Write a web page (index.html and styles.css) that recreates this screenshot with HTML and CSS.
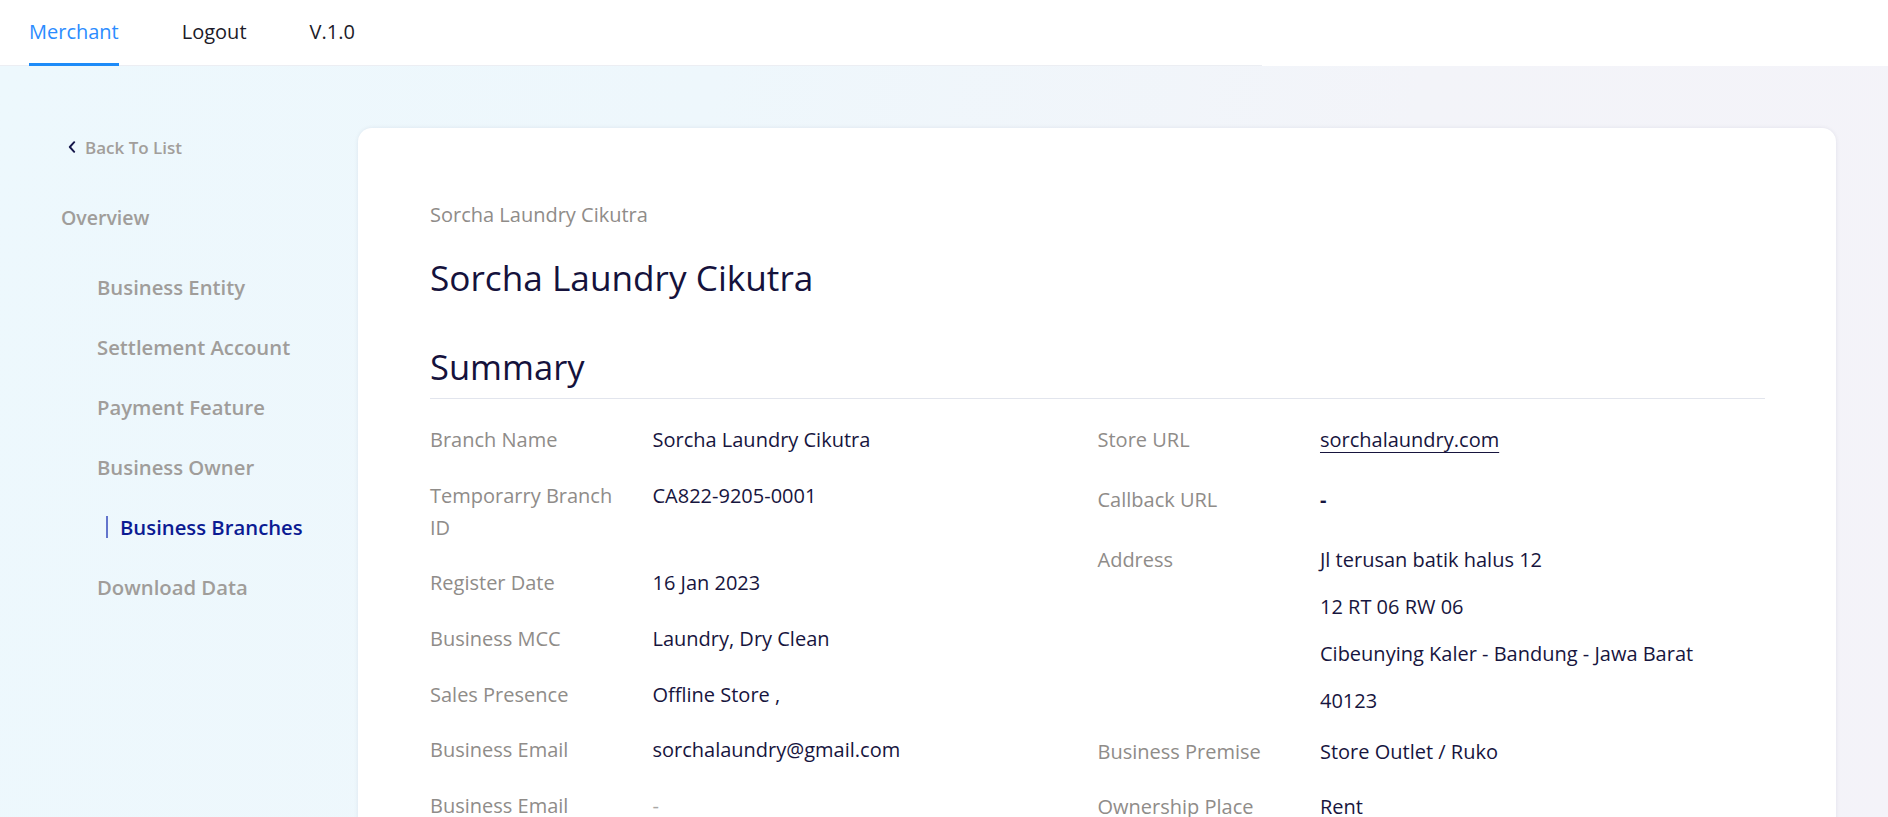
FILE: index.html
```html
<!DOCTYPE html>
<html lang="en">
<head>
<meta charset="utf-8">
<title>Merchant - Business Branches</title>
<link rel="stylesheet" href="styles.css">
</head>
<body>
<header class="topbar">
  <nav class="tabs">
    <a class="tab tab--active" href="#">Merchant</a>
    <a class="tab" href="#">Logout</a>
    <a class="tab" href="#">V.1.0</a>
  </nav>
</header>
<div class="layout">
  <aside class="sidebar">
    <a class="back-link" href="#">
      <svg class="back-icon" width="8" height="12" viewBox="0 0 8 12" aria-hidden="true"><polyline points="6.2,1.2 1.8,6 6.2,10.8" fill="none" stroke="#15164a" stroke-width="1.9" stroke-linecap="round" stroke-linejoin="round"/></svg>
      <span>Back To List</span>
    </a>
    <div class="side-title">Overview</div>
    <ul class="side-menu">
      <li class="side-item">Business Entity</li>
      <li class="side-item">Settlement Account</li>
      <li class="side-item">Payment Feature</li>
      <li class="side-item">Business Owner</li>
      <li class="side-item side-item--active">Business Branches</li>
      <li class="side-item">Download Data</li>
    </ul>
  </aside>
  <main class="card">
    <div class="breadcrumb">Sorcha Laundry Cikutra</div>
    <h1 class="page-title">Sorcha Laundry Cikutra</h1>
    <h2 class="section-title">Summary</h2>
    <div class="info-grid">
      <div class="info-col">
        <div class="info-row"><div class="info-label">Branch Name</div><div class="info-value">Sorcha Laundry Cikutra</div></div>
        <div class="info-row"><div class="info-label">Temporarry Branch ID</div><div class="info-value">CA822-9205-0001</div></div>
        <div class="info-row"><div class="info-label">Register Date</div><div class="info-value">16 Jan 2023</div></div>
        <div class="info-row"><div class="info-label">Business MCC</div><div class="info-value">Laundry, Dry Clean</div></div>
        <div class="info-row"><div class="info-label">Sales Presence</div><div class="info-value">Offline Store ,</div></div>
        <div class="info-row"><div class="info-label">Business Email</div><div class="info-value">sorchalaundry@gmail.com</div></div>
        <div class="info-row"><div class="info-label">Business Email</div><div class="info-value info-value--empty">-</div></div>
      </div>
      <div class="info-col info-col--right">
        <div class="info-row"><div class="info-label">Store URL</div><div class="info-value"><a class="info-link" href="#">sorchalaundry.com</a></div></div>
        <div class="info-row"><div class="info-label">Callback URL</div><div class="info-value info-value--dash">-</div></div>
        <div class="info-row info-row--address"><div class="info-label">Address</div>
          <div class="info-value">
            <p class="addr-line">Jl terusan batik halus 12</p>
            <p class="addr-line">12 RT 06 RW 06</p>
            <p class="addr-line">Cibeunying Kaler - Bandung - Jawa Barat</p>
            <p class="addr-line">40123</p>
          </div>
        </div>
        <div class="info-row info-row--tight"><div class="info-label">Business Premise</div><div class="info-value">Store Outlet / Ruko</div></div>
        <div class="info-row"><div class="info-label">Ownership Place</div><div class="info-value">Rent</div></div>
      </div>
    </div>
  </main>
</div>
</body>
</html>
```
FILE: styles.css
```css
* { box-sizing: border-box; }

html, body {
  margin: 0;
  padding: 0;
  height: 100%;
  overflow: hidden;
}

body {
  font-family: "Open Sans", "Noto Sans", sans-serif;
  color: #17153e;
  background: #ffffff;
}

a { text-decoration: none; color: inherit; }

/* ---------- top bar ---------- */
.topbar {
  height: 66px;
  background: #ffffff;
}

.tabs {
  width: 1262px;
  height: 66px;
  display: flex;
  gap: 63px;
  padding-left: 29px;
  border-bottom: 1px solid #eceef3;
}

.tab {
  height: 66px;
  display: flex;
  align-items: center;
  padding-bottom: 0;
  font-size: 20px;
  color: #1c1b29;
  border-bottom: 3px solid transparent;
}

.tab--active {
  color: #2b8cff;
  border-bottom-color: #1d8bf8;
}

/* ---------- layout ---------- */
.layout {
  display: flex;
  min-height: calc(100vh - 66px);
  background: linear-gradient(100deg, #edf8fd 0%, #eef7fc 35%, #f3f4f9 70%, #f4f3f9 100%);
}

.sidebar {
  flex: 0 0 358px;
  padding: 69px 0 0 61px;
}

.back-link {
  display: flex;
  align-items: center;
  gap: 9px;
  margin-left: 7px;
  height: 24px;
  font-size: 17px;
  font-weight: 600;
  color: #a29e9b;
}

.back-icon { flex: none; }

.side-title {
  margin-top: 45px;
  line-height: 28px;
  font-size: 19.5px;
  font-weight: 600;
  color: #a09d9a;
}

.side-menu {
  list-style: none;
  margin: 25px 0 0;
  padding: 0 0 0 36px;
}

.side-item {
  padding: 16px 0;
  line-height: 28px;
  font-size: 20.3px;
  font-weight: 600;
  color: #a09d9a;
}

.side-item--active {
  display: flex;
  align-items: center;
  padding-left: 9px;
  color: #0b1b93;
}

.side-item--active::before {
  content: "";
  width: 2px;
  height: 22px;
  margin-right: 12px;
  background: #6375cc;
}

/* ---------- card ---------- */
.card {
  flex: 1;
  margin: 62px 52px 0 0;
  padding: 73px 71px 72px 72px;
  background: #ffffff;
  border-radius: 14px;
  box-shadow: 0 0 4px rgba(30, 30, 70, 0.08);
}

.breadcrumb {
  line-height: 28px;
  font-size: 20px;
  color: #8f8c89;
}

.page-title {
  margin: 26px 0 0;
  line-height: 44px;
  font-size: 35.2px;
  font-weight: 400;
  color: #15123c;
}

.section-title {
  margin: 46px 0 0;
  padding-bottom: 9px;
  line-height: 44px;
  font-size: 34.5px;
  font-weight: 400;
  color: #15123c;
  border-bottom: 1px solid #e2e5ed;
}

.info-grid {
  display: grid;
  grid-template-columns: 1fr 1fr;
  margin-top: 25px;
}

.info-row {
  display: flex;
  margin-bottom: 23.7px;
  line-height: 32px;
  font-size: 20px;
}

.info-col--right .info-row { margin-bottom: 28px; }
.info-col--right .info-row--address { margin-bottom: 18.5px; }
.info-col--right .info-row--tight { margin-bottom: 23px; }

.info-label {
  flex: 0 0 33.333%;
  padding-right: 24px;
  color: #8f8c89;
}

.info-value {
  flex: 1;
  color: #17153e;
}

.info-value--empty { color: #a9a7a5; }
.info-value--dash { font-weight: 700; }

.info-link {
  color: #17153e;
  text-decoration: underline;
  text-underline-offset: 5px;
  text-decoration-thickness: 1px;
}

.addr-line {
  margin: 0 0 15px;
  line-height: 32px;
}

.addr-line:last-child { margin-bottom: 0; }
```
